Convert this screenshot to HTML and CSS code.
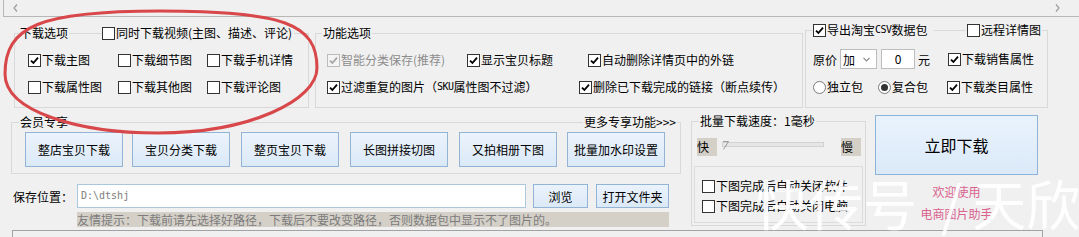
FILE: index.html
```html
<!DOCTYPE html>
<html lang="zh-CN">
<head>
<meta charset="utf-8">
<title>下载设置</title>
<link rel="stylesheet" href="styles.css">
</head>
<body>
<div class="app">
  <div class="topbar">
    <svg class="chev" width="5" height="8" viewBox="0 0 5 8"><path d="M4 0.5 L1 4 L4 7.5" /></svg>
    <svg class="chev" width="5" height="8" viewBox="0 0 5 8"><path d="M1 0.5 L4 4 L1 7.5" /></svg>
  </div>

  <div class="row1">
    <div class="group g-dl">
      <div class="gh">
        <span class="gt">下载选项</span>
        <span class="cb bgc video"><i class="box"></i>同时下载视频(主图、描述、评论)</span>
      </div>
      <div class="rows3">
        <span class="cb"><i class="box"><svg viewBox="0 0 11 11"><path d="M2 5.6 L4.4 8 L9 2.6"/></svg></i>下载主图</span>
        <span class="cb"><i class="box"></i>下载细节图</span>
        <span class="cb"><i class="box"></i>下载手机详情</span>
        <span class="cb"><i class="box"></i>下载属性图</span>
        <span class="cb"><i class="box"></i>下载其他图</span>
        <span class="cb"><i class="box"></i>下载评论图</span>
      </div>
    </div>

    <div class="group g-fn">
      <div class="gh">
        <span class="gt">功能选项</span>
      </div>
      <div class="fn-rows">
        <div class="r">
          <span class="cb dis w140"><i class="box"><svg viewBox="0 0 11 11"><path d="M2 5.6 L4.4 8 L9 2.6"/></svg></i>智能分类保存(推荐)</span>
          <span class="cb w121"><i class="box"><svg viewBox="0 0 11 11"><path d="M2 5.6 L4.4 8 L9 2.6"/></svg></i>显示宝贝标题</span>
          <span class="cb"><i class="box"><svg viewBox="0 0 11 11"><path d="M2 5.6 L4.4 8 L9 2.6"/></svg></i>自动删除详情页中的外链</span>
        </div>
        <div class="r">
          <span class="cb w252"><i class="box"><svg viewBox="0 0 11 11"><path d="M2 5.6 L4.4 8 L9 2.6"/></svg></i>过滤重复的图片（<span class="sku">SKU</span>属性图不过滤）</span>
          <span class="cb"><i class="box"><svg viewBox="0 0 11 11"><path d="M2 5.6 L4.4 8 L9 2.6"/></svg></i>删除已下载完成的链接（断点续传）</span>
        </div>
      </div>
    </div>

    <div class="group g-csv">
      <div class="gh">
        <span class="cb bgc csv"><i class="box"><svg viewBox="0 0 11 11"><path d="M2 5.6 L4.4 8 L9 2.6"/></svg></i>导出淘宝<span class="sku">CSV</span>数据包</span>
        <span class="cb bgc remote"><i class="box"></i>远程详情图</span>
      </div>
      <div class="price-row">
        <span class="plabel">原价</span>
        <span class="select">加<svg width="7" height="5" viewBox="0 0 7 5"><path d="M0.5 0.8 L3.5 3.8 L6.5 0.8"/></svg></span>
        <span class="num">0</span>
        <span class="yuan">元</span>
        <span class="cb"><i class="box"><svg viewBox="0 0 11 11"><path d="M2 5.6 L4.4 8 L9 2.6"/></svg></i>下载销售属性</span>
      </div>
      <div class="pack-row">
        <span class="rb w65"><i class="radio"></i>独立包</span>
        <span class="rb w69"><i class="radio on"></i>复合包</span>
        <span class="cb"><i class="box"><svg viewBox="0 0 11 11"><path d="M2 5.6 L4.4 8 L9 2.6"/></svg></i>下载类目属性</span>
      </div>
    </div>
  </div>

  <div class="lower">
    <div class="col1">
      <div class="group g-vip">
        <div class="gh between">
          <span class="gt">会员专享</span>
          <span class="gt">更多专享功能&gt;&gt;&gt;</span>
        </div>
        <div class="btns">
          <span class="btn">整店宝贝下载</span>
          <span class="btn">宝贝分类下载</span>
          <span class="btn">整页宝贝下载</span>
          <span class="btn">长图拼接切图</span>
          <span class="btn">又拍相册下图</span>
          <span class="btn">批量加水印设置</span>
        </div>
      </div>
      <div class="save-row">
        <span class="slabel">保存位置：</span>
        <span class="path">D:\dtshj</span>
        <span class="btn b-browse">浏览</span>
        <span class="btn b-open">打开文件夹</span>
      </div>
      <div class="hint">友情提示：下载前请先选择好路径，下载后不要改变路径，否则数据包中显示不了图片的。</div>
    </div>

    <div class="group g-speed">
      <div class="gh">
        <span class="gt">批量下载速度：1毫秒</span>
      </div>
      <div class="slider-row">
        <span class="tag">快</span>
        <span class="track"><svg class="thumb" width="8" height="11" viewBox="0 0 8 11"><path d="M1 1.5 L6.5 1.5 L1.5 9.5"/></svg></span>
        <span class="tag slow">慢</span>
      </div>
      <div class="inner">
        <span class="cb"><i class="box"></i>下图完成后自动关闭软件</span>
        <span class="cb"><i class="box"></i>下图完成后自动关闭电脑</span>
      </div>
    </div>

    <div class="col3">
      <span class="btn big">立即下载</span>
      <div class="pink p1">欢迎使用</div>
      <div class="pink p2">电商图片助手</div>
    </div>
  </div>

  <div class="bottom-panel"></div>

  <svg class="annot" width="330" height="142" viewBox="0 0 330 142">
    <path d="M5,74 C5,26 40,11 160,11 C284,11 317,24 317,68 C317,100 250,133 158,133 C80,133 5,112 5,74 Z"/>
  </svg>
  <div class="watermark"><span class="wa">快传号</span><span class="ws">/</span><span class="wb">天欣</span></div>
</div>
</body>
</html>
```
FILE: styles.css
```css
* { box-sizing: border-box; }
html, body { margin: 0; padding: 0; }
body {
  background: #f0f0f0;
  font-family: "Noto Sans CJK SC", "Noto Sans", sans-serif;
  font-size: 12px;
  color: #000;
}
.app {
  position: relative;
  width: 1079px;
  height: 237px;
  overflow: hidden;
  background: #f0f0f0;
}
i { font-style: normal; }

/* top strip */
.topbar {
  margin-left: 3px;
  height: 17px;
  border-left: 1px solid #b7b7b7;
  border-bottom: 1px solid #b7b7b7;
  display: flex;
  justify-content: space-between;
  align-items: center;
  padding: 0 19px 0 9px;
}
.chev path { fill: none; stroke: #9c9c9c; stroke-width: 1.2; }

/* group boxes */
.group { border: 1px solid #d9d9d9; }
.gh {
  display: flex;
  align-items: center;
  height: 14px;
  margin-top: -8px;
}
.gh.between { justify-content: space-between; }
.gt, .bgc {
  background: #f0f0f0;
  padding: 0 1px;
  line-height: 14px;
  white-space: nowrap;
}

/* checkbox & radio */
.cb, .rb {
  display: flex;
  align-items: center;
  height: 14px;
  line-height: 14px;
  white-space: nowrap;
}
.box {
  flex: none;
  width: 13px;
  height: 13px;
  border: 1px solid #333;
  background: #fff;
  margin-right: 1px;
  display: flex;
  align-items: center;
  justify-content: center;
}
.box svg { width: 11px; height: 11px; }
.box path { fill: none; stroke: #000; stroke-width: 1.8; }
.cb.dis { color: #8d8d8d; }
.cb.dis .box { border-color: #bcbcbc; background: #f4f4f4; }
.cb.dis .box path { stroke: #a6a6a6; }
.radio {
  flex: none;
  width: 13px;
  height: 13px;
  border-radius: 50%;
  border: 1px solid #7a7a7a;
  background: #fff;
  margin-right: 1px;
  display: flex;
  align-items: center;
  justify-content: center;
}
.radio.on::after {
  content: "";
  width: 7px;
  height: 7px;
  border-radius: 50%;
  background: #333;
}
.sku { font-family: "DejaVu Sans Mono", "Liberation Mono", monospace; font-size: 10px; letter-spacing: -0.5px; }

/* row 1 */
.row1 {
  display: flex;
  align-items: flex-start;
  margin-top: 13px;
  height: 78px;
  padding-left: 14px;
}
.g-dl { width: 295px; height: 75px; margin-top: 3px; }
.g-dl .gh { padding-left: 4px; }
.g-dl .video { margin-left: 33px; padding: 0 2px 0 0; }
.rows3 {
  display: grid;
  grid-template-columns: 90px 89px auto;
  row-gap: 13px;
  margin-top: 13px;
  padding-left: 13px;
}

.g-fn { width: 488px; height: 75px; margin-top: 3px; margin-left: 6px; }
.g-fn .gh { padding-left: 6px; }
.fn-rows { margin-top: 13px; padding-left: 11px; }
.r { display: flex; }
.r + .r { margin-top: 13px; }
.w140 { width: 140px; }
.w121 { width: 121px; }
.w252 { width: 252px; }
.w65 { width: 65px; }
.w69 { width: 69px; }

.g-csv { width: 243px; height: 78px; margin-left: 2px; }
.g-csv .gh { padding-left: 6px; }
.g-csv .csv { width: 122px; }
.g-csv .remote { margin-left: 32px; }
.price-row {
  display: flex;
  align-items: center;
  height: 20px;
  margin-top: 12px;
  padding-left: 7px;
}
.plabel { width: 24px; }
.select {
  margin-left: 3px;
  width: 37px;
  height: 20px;
  border: 1px solid #bdbdbd;
  background: #fff;
  display: flex;
  align-items: center;
  justify-content: space-between;
  padding: 0 6px 0 2px;
}
.select path { fill: none; stroke: #8a8a8a; stroke-width: 1.2; }
.num {
  margin-left: 4px;
  width: 34px;
  height: 20px;
  border: 1px solid #bdbdbd;
  background: #fff;
  text-align: center;
  line-height: 18px;
}
.yuan { margin-left: 3px; width: 12px; margin-right: 18px; }
.pack-row {
  display: flex;
  align-items: center;
  margin-top: 11px;
  padding-left: 7px;
}

/* lower */
.lower {
  display: flex;
  align-items: flex-start;
  height: 122px;
}
.col1 { margin-left: 11px; width: 670px; }
.g-vip { margin-top: 14px; height: 52px; }
.g-vip .gh { padding: 0 3px 0 7px; }
.btns {
  display: grid;
  grid-template-columns: 107px 109px 109px 109px 108px 98px;
  margin-top: 3px;
  padding-left: 13px;
}
.btn {
  display: flex;
  align-items: center;
  justify-content: center;
  border: 1px solid #93b4d4;
  background: linear-gradient(#ebf3fc, #dbe9f7);
  white-space: nowrap;
}
.btns .btn { width: 98px; height: 35px; }

.save-row {
  display: flex;
  align-items: center;
  margin-top: 10px;
  height: 24px;
}
.slabel { width: 66px; padding-left: 2px; }
.path {
  width: 449px;
  height: 24px;
  border: 1px solid #a9c7dd;
  background: #fff;
  padding-left: 3px;
  line-height: 22px;
  font-family: "DejaVu Sans Mono", "Liberation Mono", monospace;
  font-size: 10px;
  color: #7d7d7d;
}
.b-browse { margin-left: 7px; width: 55px; height: 24px; }
.b-open { margin-left: 8px; width: 73px; height: 24px; }
.hint {
  margin-top: 4px;
  margin-left: 66px;
  width: 592px;
  height: 15px;
  line-height: 15px;
  background: #d4d0c8;
  color: #7c7c7c;
  white-space: nowrap;
  overflow: hidden;
}

.g-speed { margin-left: 10px; margin-top: 13px; width: 175px; height: 105px; }
.g-speed .gh { padding-left: 7px; }
.slider-row {
  display: flex;
  align-items: flex-start;
  margin-top: 10px;
  padding-left: 5px;
  height: 18px;
}
.tag {
  width: 20px;
  height: 18px;
  line-height: 18px;
  background: #d4d0c8;
}
.track {
  position: relative;
  margin-left: 5px;
  margin-top: 4px;
  width: 102px;
  height: 5px;
  border: 1px solid #d2d2d2;
  background: #e6e6e6;
}
.thumb { position: absolute; left: -1px; top: -3px; }
.thumb path { fill: none; stroke: #9a9a9a; stroke-width: 1; }
.tag.slow { margin-left: 17px; }
.inner {
  margin-top: 10px;
  margin-left: 2px;
  width: 169px;
  height: 57px;
  border: 1px solid #dcdcdc;
  padding: 12px 0 0 7px;
  display: flex;
  flex-direction: column;
  row-gap: 6px;
}

.col3 { margin-left: 9px; width: 163px; }
.btn.big {
  margin-top: 7px;
  height: 60px;
  font-size: 16px;
  border-color: #8db3d8;
  background: linear-gradient(#e9f3fd, #dbe9f8);
}
.pink {
  text-align: center;
  line-height: 14px;
  color: #d9628e;
}
.p1 { margin-top: 10px; }
.p2 { margin-top: 8px; }

.bottom-panel {
  margin-left: 12px;
  width: 1031px;
  height: 20px;
  border-top: 1px solid #a3a3a3;
  border-left: 1px solid #a3a3a3;
  border-right: 1px solid #a3a3a3;
}

/* overlays: annotation ellipse and watermark */
.annot {
  position: absolute;
  left: 0;
  top: 0;
  pointer-events: none;
}
.annot path { fill: none; stroke: #d8474a; stroke-width: 3; }
.watermark {
  position: absolute;
  left: 755px;
  top: 176px;
  display: flex;
  font-size: 54px;
  line-height: 1;
  color: rgba(255, 255, 255, 0.93);
  white-space: nowrap;
  pointer-events: none;
}
.ws { margin-left: 24px; }
.wb { margin-left: 10px; }
```
